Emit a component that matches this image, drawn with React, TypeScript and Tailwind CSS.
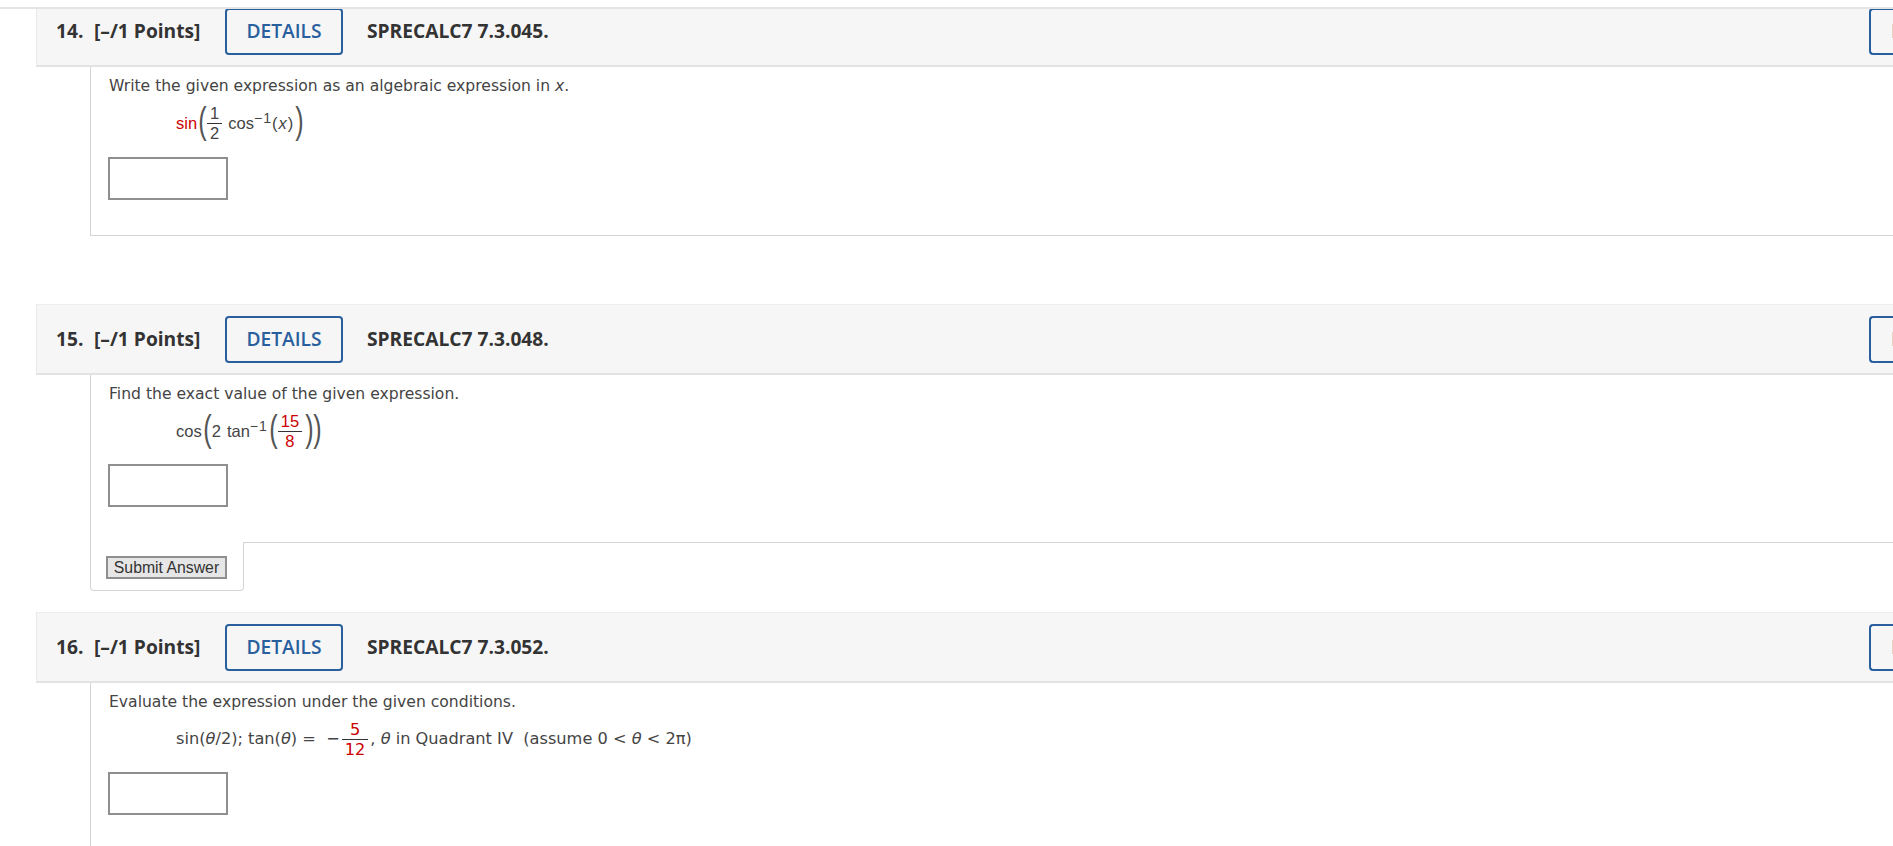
import React from 'react';

const Fraction = ({ top, bottom, red }: { top: string; bottom: string; red?: 'both' | 'none' }) => (
  <span className="inline-flex flex-col items-center mx-[2px] leading-[19px]">
    <span className={red === 'none' ? 'px-[3px]' : 'px-[3px] text-[#cc0000]'}>{top}</span>
    <span className="block w-full h-px bg-[#333]" />
    <span className={red === 'both' ? 'px-[3px] text-[#cc0000]' : 'px-[3px]'}>{bottom}</span>
  </span>
);

const Paren = ({ c }: { c: string }) => (
  <span className="inline-block text-[36px] leading-[36px] font-light text-[#555] scale-x-[0.7] w-[8px] text-center -mt-[4px]">{c}</span>
);

const Sup = ({ children }: { children: React.ReactNode }) => (
  <span className="text-[14px] tracking-[1px] -mt-[9px]">{children}</span>
);

const AnswerBox = () => (
  <input type="text" aria-label="answer" className="block -ml-px w-[120px] h-[43px] border-2 border-[#8f8f8f] bg-white" />
);

interface QuestionProps {
  number: number;
  code: string;
  prompt: React.ReactNode;
  math: React.ReactNode;
  children?: React.ReactNode;
  panelClass: string;
  answerClass: string;
}

const Question = ({ number, code, prompt, math, children, panelClass, answerClass }: QuestionProps) => (
  <section>
    <header className="h-[71px] flex items-center bg-[#f6f6f6] border-b-2 border-t border-[#e2e2e2] border-t-[#eeeeee] border-l border-l-[#e8e8e8] pl-[19px] font-['Open_Sans',sans-serif] text-[#333] text-[19.2px]">
      <span className="font-bold w-[38px] pt-px">{number}.</span>
      <span className="font-bold w-[131px] whitespace-nowrap pt-px">[–/1 Points]</span>
      <button className="w-[118px] h-[47px] border-2 border-[#2a5f9e] rounded-[4px] text-[#2a5f9e] text-[19.2px] font-semibold bg-[#f6f6f6]">DETAILS</button>
      <span className="ml-[24px] font-bold whitespace-nowrap pt-px">{code}</span>
      <button className="ml-auto w-[24px] h-[47px] overflow-hidden border-2 border-r-0 border-[#2a5f9e] rounded-l-[4px] text-left pl-[20px] text-[#2a5f9e] text-[19.2px] font-semibold whitespace-nowrap">MY NOTES</button>
    </header>
    <div className={`ml-[54px] border-l border-[#d4d4d4] pl-[18px] pt-[9px] font-['DejaVu_Sans',sans-serif] text-[#444] text-[15.6px] ${panelClass}`}>
      <p className="h-[20px] leading-[20px]">{prompt}</p>
      <div className="mt-[9px] h-[36px] pl-[67px] flex items-center whitespace-nowrap font-['Liberation_Sans',sans-serif] text-[16.5px]">{math}</div>
      <div className={answerClass}><AnswerBox /></div>
    </div>
    {children}
  </section>
);

export default function App() {
  return (
    <div className="h-[846px] overflow-hidden bg-white flex flex-col">
      <div className="h-[9px] shrink-0 bg-white border-b-2 border-[#e4e4e4] relative z-10" />
      <main className="flex-1 overflow-hidden pl-[36px]">
        <div className="-mt-[13px]">
          <Question
            number={14}
            code="SPRECALC7 7.3.045."
            panelClass="h-[169px] border-b"
            answerClass="mt-[16px]"
            prompt={<>Write the given expression as an algebraic expression in <i>x</i>.</>}
            math={
              <>
                <span className="text-[#cc0000]">sin</span>
                <Paren c="(" />
                <Fraction top="1" bottom="2" red="none" />
                <span className="ml-[4px]">cos</span>
                <Sup>−1</Sup>
                <span className="tracking-[1px]">(<i>x</i>)</span>
                <Paren c=")" />
              </>
            }
          />
          <div className="mt-[68px]">
            <Question
              number={15}
              code="SPRECALC7 7.3.048."
              panelClass="h-[167px]"
              answerClass="mt-[15px]"
              prompt="Find the exact value of the given expression."
              math={
                <>
                  <span>cos</span>
                  <Paren c="(" />
                  <span className="ml-[2px]">2</span>
                  <span className="ml-[6px]">tan</span>
                  <Sup>−1</Sup>
                  <Paren c="(" />
                  <Fraction top="15" bottom="8" red="both" />
                  <Paren c=")" />
                  <Paren c=")" />
                </>
              }
            >
              <div className="ml-[54px] flex h-[49px]">
                <div className="w-[154px] border-x border-b border-[#d4d4d4] rounded-b-[4px] pl-[15px] pt-[13px]">
                  <button className="w-[121px] h-[23px] border-2 border-[#8f8f8f] bg-[#e6e6e6] font-['Liberation_Sans',sans-serif] text-[15.8px] leading-none text-[#333]">Submit Answer</button>
                </div>
                <div className="flex-1 border-t border-[#d4d4d4]" />
              </div>
            </Question>
          </div>
          <div className="mt-[21px]">
            <Question
              number={16}
              code="SPRECALC7 7.3.052."
              panelClass="h-[200px]"
              answerClass="mt-[15px]"
              prompt="Evaluate the expression under the given conditions."
              math={
                <span className="inline-flex items-center font-['DejaVu_Sans',sans-serif] text-[16.2px]">
                  <span>sin(<i>θ</i>/2); tan(<i>θ</i>) =&nbsp; −</span>
                  <Fraction top="5" bottom="12" red="both" />
                  <span>, <i>θ</i> in Quadrant IV&nbsp; (assume 0 &lt; <i>θ</i> &lt; 2π)</span>
                </span>
              }
            />
          </div>
        </div>
      </main>
    </div>
  );
}
